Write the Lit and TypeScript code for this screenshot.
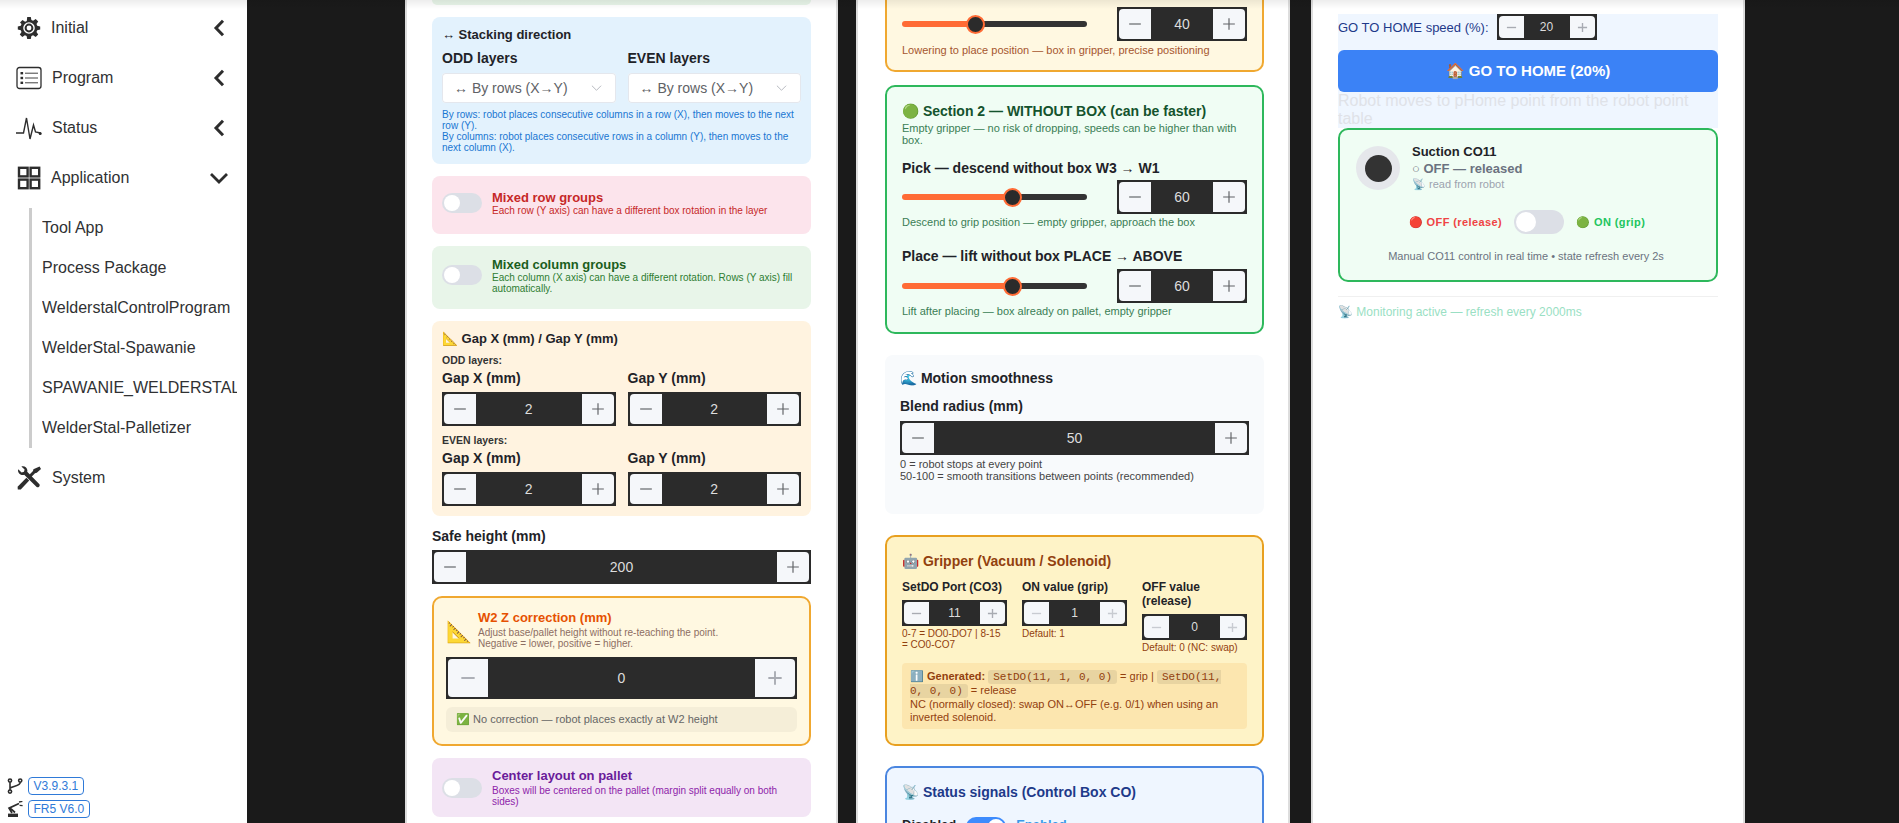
import { LitElement, html, css, svg } from "lit";
import { customElement } from "lit/decorators.js";

const chevL = html`<svg class="chev" viewBox="0 0 12 18"><path d="M10 1.800 3 9 10 16.200" fill="none" stroke="#2d2d2d" stroke-width="3"/></svg>`;
const chevD = html`<svg class="chev wide" viewBox="0 0 20 12"><path d="M2 2 10 10 18 2" fill="none" stroke="#2d2d2d" stroke-width="2.8"/></svg>`;
const icons = {
  gear: html`<svg class="ico" viewBox="0 0 24 24"><path fill="#2d2d2d" fill-rule="evenodd" d="M10.2 1h3.6l.6 3 1.7.7 2.6-1.7 2.5 2.5-1.7 2.6.7 1.7 3 .6v3.2l-3 .6-.7 1.7 1.7 2.6-2.5 2.5-2.6-1.7-1.7.7-.6 3h-3.6l-.6-3-1.7-.7-2.6 1.7-2.5-2.5 1.7-2.6-.7-1.7-3-.6v-3.2l3-.6.7-1.7L3 6.5 5.5 4l2.6 1.7 1.7-.7zM12 6.2a5.8 5.8 0 1 0 0 11.6 5.8 5.8 0 0 0 0-11.6z"/><circle cx="12" cy="12" r="3.4" fill="none" stroke="#2d2d2d" stroke-width="2"/></svg>`,
  list: html`<svg class="ico big" viewBox="0 0 26 24"><rect x="1" y="1.5" width="24" height="21" rx="2.5" fill="none" stroke="#2d2d2d" stroke-width="1.3"/><rect x="4.5" y="6" width="2.6" height="2.4" fill="#2d2d2d"/><rect x="4.5" y="10.8" width="2.6" height="2.4" fill="#2d2d2d"/><rect x="4.5" y="15.6" width="2.6" height="2.4" fill="#2d2d2d"/><path d="M9 7.2h13M9 12h13M9 16.8h13" stroke="#2d2d2d" stroke-width=".9"/></svg>`,
  pulse: html`<svg class="ico big" viewBox="0 0 26 24"><path d="M0 17h7.5l3-15 3.5 21 3.5-14 2 7 5 1" fill="none" stroke="#2d2d2d" stroke-width="1.4"/><circle cx="24.2" cy="17.4" r="1.5" fill="#2d2d2d"/></svg>`,
  grid: html`<svg class="ico" viewBox="0 0 24 24"><g fill="none" stroke="#2d2d2d" stroke-width="2.4"><rect x="2" y="1.8" width="8.6" height="8.6"/><rect x="13.6" y="1.8" width="8.6" height="8.6"/><rect x="2" y="13.6" width="8.6" height="8.6"/><rect x="13.6" y="13.6" width="8.6" height="8.6"/></g></svg>`,
  tools: html`<svg class="ico" viewBox="0 0 24 24"><path fill="#2d2d2d" d="M1.2 3.2 4.6 6.4l2.4-.6.6-2.4L4.4.4c3.600-1 6.800 2 5.800 5.400l12 12.200c1.600 1.800-1 4.400-2.800 2.800L7.200 8.800C3.600 9.800.2 6.800 1.200 3.200z"/><path fill="#2d2d2d" d="M22.600.6 24 3l-4.200 3.800-1.800.4-4.200 4.400-2.200-2.200L16 5l.4-1.800z"/><path fill="#2d2d2d" d="M9.400 11.800l2.800 2.800-8.400 9-3-.2-.2-2.600z"/></svg>`,
  branch: html`<svg class="mini" viewBox="0 0 16 16"><g fill="none" stroke="#2d2d2d" stroke-width="1.6"><circle cx="3" cy="2.6" r="1.6"/><circle cx="3" cy="13.6" r="1.6"/><circle cx="13.2" cy="2.6" r="1.6"/><path d="M3 4.2v7.8M13.2 4.2c0 4-7 3.5-10.2 6"/></g></svg>`,
  arm: html`<svg class="mini" viewBox="0 0 16 16"><path fill="#2d2d2d" d="M1 12.600h10V16H1z"/><path d="M5 12 2 7.200 12 2.400M2.400 6.400 8 11.500" fill="none" stroke="#2d2d2d" stroke-width="1.7"/><path d="M12 1l3.400-.6M12.600 4.400l3 .3" stroke="#2d2d2d" stroke-width="1.3"/></svg>`,
};

const minus = svg`<path d="M1 6h10" stroke="currentColor" fill="none"/>`;
const plus = svg`<path d="M1 6h10M6 1v10" stroke="currentColor" fill="none"/>`;

function stepper(v: string | number, cls = "") {
  return html`<div class="step ${cls}">
    <span class="sb l"><svg viewBox="0 0 12 12">${minus}</svg></span>
    <span class="val">${v}</span>
    <span class="sb r"><svg viewBox="0 0 12 12">${plus}</svg></span>
  </div>`;
}
const toggle = (cls = "") => html`<span class="tog ${cls}"><i></i></span>`;
function slider(p: number) {
  return html`<div class="slider"><div class="fill" style="width:${p}px"></div><div class="thumb"></div><div class="rest"></div></div>`;
}
const sel = html`<div class="sel"><span>↔ By rows (X→Y)</span><svg viewBox="0 0 12 8"><path d="M1 1.500 6 6.500 11 1.500" fill="none" stroke="#b0b3ba" stroke-width="1"/></svg></div>`;

@customElement("app-root")
export class AppRoot extends LitElement {
  static styles = css`
    :host { display: block; font-family: "Liberation Sans", Arial, sans-serif; color: #1f2328; }
    * { box-sizing: border-box; }
    .page { display: flex; height: 823px; width: 1899px; overflow: hidden; background: #1a1a1a; position: relative; }
    .topfade { position: absolute; inset: 0 0 auto 0; height: 9px; background: linear-gradient(#00000012, #00000000); pointer-events: none; }

    .side { width: 247px; flex: none; background: #fff; padding-top: 3px; display: flex; flex-direction: column; color: #303133; font-size: 16px; }
    .mi { height: 50px; display: flex; align-items: center; padding-left: 17px; position: relative; flex: none; }
    .mi .t { margin-left: 10px; }
    .ico { width: 24px; height: 24px; flex: none; }
    .ico.big { width: 26px; margin-left: -1px; margin-right: -1px; }
    .mi .t.off { margin-left: 11px; }
    .chev { width: 12px; height: 18px; margin-left: auto; margin-right: 22px; }
    .chev.wide { width: 20px; height: 12px; margin-right: 18px; }
    .subs { margin: 5px 0 5px 29px; border-left: 3px solid #ccc; padding-left: 10px; width: 208px; flex: none; }
    .subs div { height: 40px; line-height: 40px; white-space: nowrap; overflow: hidden; font-size: 16px; }
    .ver { margin-top: auto; padding: 0 0 5px 7px; display: flex; flex-direction: column; gap: 5px; }
    .ver div { display: flex; align-items: center; gap: 5px; height: 18px; }
    .mini { width: 16px; height: 16px; flex: none; }
    .tag { border: 1px solid #2f7ad8; color: #2f7ad8; border-radius: 4px; font-size: 12px; height: 18px; line-height: 16px; padding: 0 4.5px; }

    .panel { background: #fff; flex: none; height: 823px; overflow: hidden; border-left: 2px solid #ddd; border-right: 2px solid #ddd; }
    .p1 { width: 433px; margin-left: 158px; padding: 0 25px; }
    .p2 { width: 434px; margin-left: 18px; padding: 0 24px 0 27px; }
    .p3 { width: 434px; margin-left: 21px; padding: 0 25px; }
    .card { border-radius: 8px; margin-bottom: 12px; }
    .stub { height: 5px; background: #e8f5e9; border-radius: 0 0 8px 8px; }
    .blue { background: #e3f2fd; padding: 10px 10px 11px 10px; }
    .ttl { font-size: 13px; font-weight: 700; line-height: 16px; color: #1f2328; }
    .lab { font-size: 14px; font-weight: 700; line-height: 18px; color: #1f2328; }
    .two { display: grid; grid-template-columns: 1fr 1fr; gap: 12px; }
    .blue .two { margin-top: 6px; }
    .sel { height: 30px; margin-top: 6px; background: #fff; border-radius: 4px; box-shadow: 0 0 0 1px #e4e7ed inset; display: flex; align-items: center; justify-content: space-between; padding: 0 13px 0 12px; font-size: 14px; color: #606266; }
    .sel svg { width: 11px; height: 8px; margin-right: 1px; }
    .hint { font-size: 10px; line-height: 11px; color: #1976d2; margin-top: 6px; }

    .tcard { display: flex; align-items: center; gap: 10px; padding: 0 10px; }
    .tog { width: 40px; height: 20px; border-radius: 10px; background: #dcdfe6; flex: none; padding: 2px; display: flex; }
    .tog i { width: 16px; height: 16px; border-radius: 50%; background: #fff; }
    .tog.on { background: #3d8bfd; justify-content: flex-end; }
    .tt { font-size: 13px; font-weight: 700; line-height: 15px; }
    .td { font-size: 10px; line-height: 11px; }
    .pink { height: 58px; background: #fce4ec; padding-bottom: 5px; }
    .pink .tt, .pink .td { color: #c62828; }
    .mint { height: 63px; background: #e8f5e9; padding-bottom: 5px; }
    .mint .tt { color: #1b5e20; }
    .mint .td { color: #2e7d32; }
    .lilac { height: 59px; background: #f3e5f5; }
    .lilac .tt { color: #6a1b9a; }
    .lilac .td { color: #8e24aa; margin-top: 2px; }

    .gaps { background: #fff3e0; padding: 10px; }
    .gaps .ttl { margin-bottom: 7px; }
    .sm { font-size: 10.5px; font-weight: 700; line-height: 13px; color: #333; margin-bottom: 2px; }
    .gaps .lab { margin-bottom: 5px; }
    .gaps .two { margin-bottom: 8px; gap: 12px; }
    .gaps .two:last-child { margin-bottom: 0; }
    .safe { margin-bottom: 5px; margin-top: -1px; }
    .mb { margin-bottom: 12px; }

    .step { display: flex; height: 34px; background: #2b2b2b; padding: 2px; color: #ddd; font-size: 14px; }
    .sb { width: 32px; background: #f5f7fa; color: #606266; flex: none; display: flex; align-items: center; justify-content: center; }
    .sb svg { width: 14px; height: 14px; }
    .sb path { stroke-width: 1; }
    .sb.l { border-radius: 4px 0 0 4px; }
    .sb.r { border-radius: 0 4px 4px 0; }
    .val { flex: 1; text-align: center; align-self: center; }
    .step.tall { height: 42px; }
    .step.tall .sb { width: 40px; color: #a8abb2; }
    .step.tall .sb svg { width: 16px; height: 16px; }
    .step.tall .sb path { stroke-width: 1.4; }
    .step.sm2 { height: 26px; font-size: 12px; }
    .step.sm2 .sb { width: 25px; color: #a8abb2; }
    .step.sm2 .sb svg { width: 11px; height: 11px; }
    .step.sm2 .sb path { stroke-width: 1.5; }
    .step.faint .sb { color: #c8cbd1; }

    .w2 { background: #fff8e1; border: 2px solid #f0a830; border-radius: 10px; padding: 12px; height: 150px; }
    .w2head { display: flex; gap: 9px; align-items: center; height: 40px; margin-bottom: 8px; margin-top: -1px; }
    .w2ico { font-size: 21px; line-height: 24px; width: 23px; margin-top: 6px; }
    .w2 .tt { color: #e65100; }
    .w2 .td { color: #8d6e63; margin-top: 2px; }
    .note { margin-top: 8px; height: 25px; border-radius: 6px; background: #0000000a; font-size: 11px; line-height: 25px; color: #666; padding-left: 10px; }

    .sec { border: 2px solid; border-radius: 10px; }
    .orange-top { height: 72px; background: #fff8e1; border-color: #f0a830; border-top: none; border-radius: 0 0 10px 10px; padding: 7px 15px 0; margin-bottom: 13px; }
    .srow { display: flex; align-items: center; justify-content: space-between; }
    .srow .step { width: 130px; }
    .slider { width: 185px; display: flex; align-items: center; }
    .fill { height: 6px; background: #ff6b35; border-radius: 3px 0 0 3px; margin-right: -9px; }
    .thumb { width: 19px; height: 19px; border-radius: 50%; background: #2b2b2b; border: 2px solid #ff6b35; flex: none; position: relative; }
    .rest { height: 6px; flex: 1; background: #333; border-radius: 0 3px 3px 0; margin-left: -2px; }
    .nt { font-size: 11px; line-height: 13px; margin-top: 2px; }
    .orange-top .nt { color: #a5562f; margin-top: 3px; }
    .s2 { height: 249px; background: #f0fdf4; border-color: #2eb85c; padding: 16px 15px 0; margin-bottom: 21px; }
    .s2 .ttl2 { color: #14532d; }
    .ttl2 { font-size: 14px; font-weight: 700; line-height: 17px; }
    .s2 .nt { color: #3a7d54; }
    .s2 .lbl { margin: 13px 0 3px; }
    .s2 .lbl.second { margin: 18px 0 4px; }
    .s2 .intro { font-size: 11px; line-height: 12px; color: #3a7d54; margin-top: 2px; }
    .smooth { height: 159px; background: #f8fafc; padding: 15px 15px 0; margin-bottom: 21px; }
    .smooth .lab { margin: 10px 0 6px; }
    .smooth .nt { color: #444; line-height: 12px; margin-top: 3px; }
    .grip { height: 211px; background: #fef3c7; border-color: #e8a020; padding: 16px 15px 0; margin-bottom: 20px; }
    .grip .ttl2 { color: #92400e; }
    .g3 { display: grid; grid-template-columns: repeat(3, 105px); gap: 15px; margin-top: 10px; height: 83px; }
    .gl { font-size: 12px; font-weight: 700; line-height: 14px; margin-bottom: 6px; color: #1f2328; }
    .gn { font-size: 10px; line-height: 11px; color: #92400e; margin-top: 2px; }
    .genbox { background: #fbd38d66; border-radius: 4px; padding: 7px 8px 0; height: 66px; font-size: 11px; line-height: 13px; color: #92400e; }
    .genbox code { font-family: "Liberation Mono", monospace; font-size: 11px; background: #00000014; padding: 1px 5px; border-radius: 3px; }
    .status { background: #eff6ff; border-color: #4a86e0; padding: 16px 15px 0; height: 100px; }
    .status .ttl2 { color: #1e3a8a; }
    .dis { display: flex; align-items: flex-start; gap: 10px; margin-top: 16px; font-size: 13px; line-height: 16px; font-weight: 700; }
    .dis em { font-style: normal; color: #3b9ae8; }

    .home { background: #eff6ff; margin-top: 14px; height: 114px; }
    .hrow { display: flex; align-items: center; gap: 8px; font-size: 13px; color: #1e3a8a; }
    .hrow .step { width: 100px; }
    .gobtn { height: 42px; background: #3b82f6; border-radius: 6px; margin-top: 10px; color: #fff; font-weight: 700; font-size: 15px; display: flex; align-items: center; justify-content: center; }
    .ghost { font-size: 16px; line-height: 18px; color: #dfe2e8; }
    .suct { height: 154px; background: #f0fdf4; border-color: #2eb85c; padding: 16px 16px 0; }
    .sh { display: flex; gap: 12px; }
    .led { width: 44px; height: 44px; border-radius: 50%; background: #e5e7eb; display: flex; align-items: center; justify-content: center; }
    .led i { width: 27px; height: 27px; border-radius: 50%; background: #333; }
    .sn { font-size: 13px; font-weight: 700; line-height: 16px; margin-top: -2px; }
    .ss { font-size: 13px; font-weight: 700; line-height: 17px; color: #6b7280; }
    .sr { font-size: 11px; line-height: 15px; color: #9ca3af; }
    .tr { display: flex; align-items: center; justify-content: center; gap: 12px; margin-top: 18px; font-size: 11px; font-weight: 700; letter-spacing: .4px; padding-right: 2px; }
    .red { color: #ef4444; }
    .grn { color: #22c55e; }
    .tog.w { width: 50px; height: 24px; border-radius: 12px; padding: 2px; }
    .tog.w i { width: 20px; height: 20px; }
    .mn { text-align: center; font-size: 11px; line-height: 13px; color: #6b7280; margin-top: 16px; padding-right: 4px; }
    .div { border-top: 1px solid #f0f0f0; margin-top: 14px; padding-top: 8px; font-size: 12px; line-height: 14px; color: #9adfc4; }
  `;

  render() {
    return html`<div class="page">
      <nav class="side">
        <div class="mi">${icons.gear}<span class="t">Initial</span>${chevL}</div>
        <div class="mi">${icons.list}<span class="t off">Program</span>${chevL}</div>
        <div class="mi">${icons.pulse}<span class="t off">Status</span>${chevL}</div>
        <div class="mi">${icons.grid}<span class="t">Application</span>${chevD}</div>
        <div class="subs">
          <div>Tool App</div><div>Process Package</div><div>WelderstalControlProgram</div>
          <div>WelderStal-Spawanie</div><div>SPAWANIE_WELDERSTAL</div><div>WelderStal-Palletizer</div>
        </div>
        <div class="mi">${icons.tools}<span class="t off">System</span></div>
        <div class="ver">
          <div>${icons.branch}<span class="tag">V3.9.3.1</span></div>
          <div>${icons.arm}<span class="tag">FR5 V6.0</span></div>
        </div>
      </nav>

      <section class="panel p1">
        <div class="card stub"></div>
        <div class="card blue">
          <div class="ttl">↔ Stacking direction</div>
          <div class="two">
            <div><div class="lab">ODD layers</div>${sel}</div>
            <div><div class="lab">EVEN layers</div>${sel}</div>
          </div>
          <div class="hint">By rows: robot places consecutive columns in a row (X), then moves to the next row (Y).<br>By columns: robot places consecutive rows in a column (Y), then moves to the next column (X).</div>
        </div>
        <div class="card tcard pink">${toggle()}<div><div class="tt">Mixed row groups</div><div class="td">Each row (Y axis) can have a different box rotation in the layer</div></div></div>
        <div class="card tcard mint">${toggle()}<div><div class="tt">Mixed column groups</div><div class="td">Each column (X axis) can have a different rotation. Rows (Y axis) fill automatically.</div></div></div>
        <div class="card gaps">
          <div class="ttl">📐 Gap X (mm) / Gap Y (mm)</div>
          <div class="sm">ODD layers:</div>
          <div class="two">
            <div><div class="lab">Gap X (mm)</div>${stepper(2)}</div>
            <div><div class="lab">Gap Y (mm)</div>${stepper(2)}</div>
          </div>
          <div class="sm">EVEN layers:</div>
          <div class="two">
            <div><div class="lab">Gap X (mm)</div>${stepper(2)}</div>
            <div><div class="lab">Gap Y (mm)</div>${stepper(2)}</div>
          </div>
        </div>
        <div class="lab safe">Safe height (mm)</div>
        <div class="mb">${stepper(200)}</div>
        <div class="w2 mb">
          <div class="w2head"><span class="w2ico">📐</span><div><div class="tt">W2 Z correction (mm)</div><div class="td">Adjust base/pallet height without re-teaching the point.<br>Negative = lower, positive = higher.</div></div></div>
          ${stepper(0, "tall")}
          <div class="note">✅ No correction — robot places exactly at W2 height</div>
        </div>
        <div class="card tcard lilac">${toggle()}<div><div class="tt">Center layout on pallet</div><div class="td">Boxes will be centered on the pallet (margin split equally on both sides)</div></div></div>
      </section>

      <section class="panel p2">
        <div class="sec orange-top">
          <div class="srow">${slider(73)}${stepper(40)}</div>
          <div class="nt">Lowering to place position — box in gripper, precise positioning</div>
        </div>
        <div class="sec s2">
          <div class="ttl2">🟢 Section 2 — WITHOUT BOX (can be faster)</div>
          <div class="intro">Empty gripper — no risk of dropping, speeds can be higher than with box.</div>
          <div class="lab lbl">Pick — descend without box W3 → W1</div>
          <div class="srow">${slider(110)}${stepper(60)}</div>
          <div class="nt">Descend to grip position — empty gripper, approach the box</div>
          <div class="lab lbl second">Place — lift without box PLACE → ABOVE</div>
          <div class="srow">${slider(110)}${stepper(60)}</div>
          <div class="nt">Lift after placing — box already on pallet, empty gripper</div>
        </div>
        <div class="card smooth">
          <div class="ttl2">🌊 Motion smoothness</div>
          <div class="lab">Blend radius (mm)</div>
          ${stepper(50)}
          <div class="nt">0 = robot stops at every point<br>50-100 = smooth transitions between points (recommended)</div>
        </div>
        <div class="sec grip">
          <div class="ttl2">🤖 Gripper (Vacuum / Solenoid)</div>
          <div class="g3">
            <div><div class="gl">SetDO Port (CO3)</div>${stepper(11, "sm2")}<div class="gn">0-7 = DO0-DO7 | 8-15 = CO0-CO7</div></div>
            <div><div class="gl">ON value (grip)</div>${stepper(1, "sm2 faint")}<div class="gn">Default: 1</div></div>
            <div><div class="gl">OFF value (release)</div>${stepper(0, "sm2 faint")}<div class="gn">Default: 0 (NC: swap)</div></div>
          </div>
          <div class="genbox">ℹ️ <b>Generated:</b> <code>SetDO(11, 1, 0, 0)</code> = grip | <code>SetDO(11, 0, 0, 0)</code> = release<br>NC (normally closed): swap ON↔OFF (e.g. 0/1) when using an inverted solenoid.</div>
        </div>
        <div class="sec status">
          <div class="ttl2">📡 Status signals (Control Box CO)</div>
          <div class="dis"><span>Disabled</span>${toggle("on")}<em>Enabled</em></div>
        </div>
      </section>

      <section class="panel p3">
        <div class="home">
          <div class="hrow"><span>GO TO HOME speed (%):</span>${stepper(20, "sm2")}</div>
          <div class="gobtn">🏠 GO TO HOME (20%)</div>
          <div class="ghost">Robot moves to pHome point from the robot point table</div>
        </div>
        <div class="sec suct">
          <div class="sh">
            <div class="led"><i></i></div>
            <div>
              <div class="sn">Suction CO11</div>
              <div class="ss">○ OFF — released</div>
              <div class="sr">📡 read from robot</div>
            </div>
          </div>
          <div class="tr"><span class="red">🔴 OFF (release)</span>${toggle("w")}<span class="grn">🟢 ON (grip)</span></div>
          <div class="mn">Manual CO11 control in real time • state refresh every 2s</div>
        </div>
        <div class="div">📡 Monitoring active — refresh every 2000ms</div>
      </section>
      <div class="topfade"></div>
    </div>`;
  }
}
